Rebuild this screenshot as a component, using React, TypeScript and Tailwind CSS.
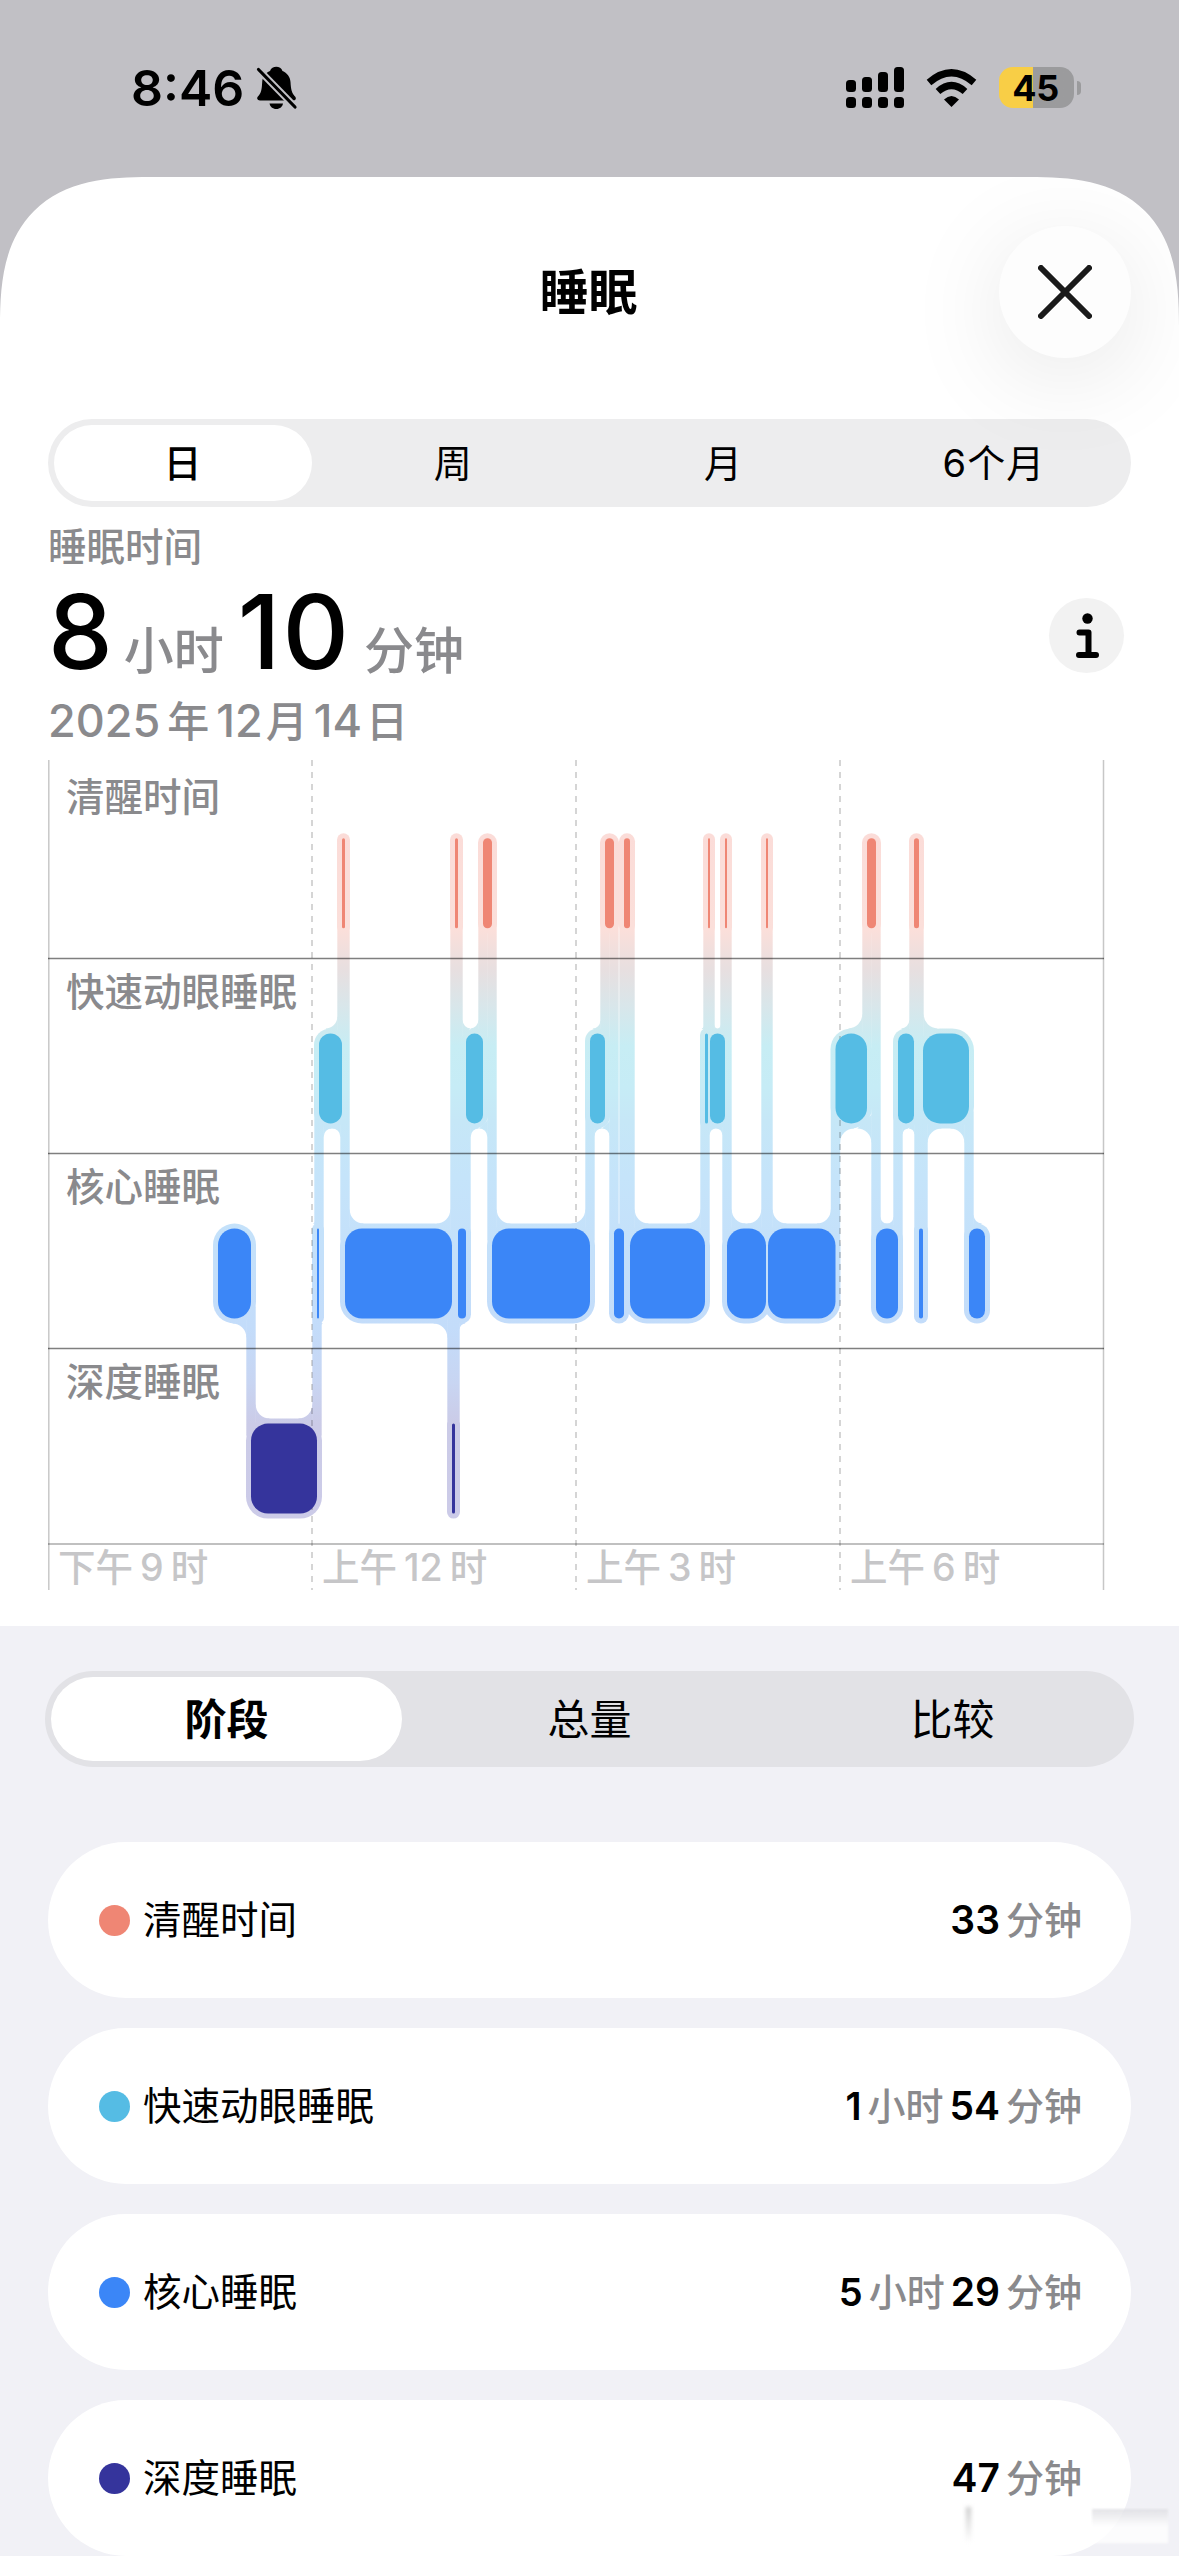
import React, { useState } from "react";

type Stage = 0 | 1 | 2 | 3;

interface Segment {
  stage: Stage;
  start: number;
  end: number;
}

const STAGES = [
  { name: "清醒时间", color: "#ef8674", dot: "bg-[#ef8674]", hours: "", minutes: "33" },
  { name: "快速动眼睡眠", color: "#55bce4", dot: "bg-[#55bce4]", hours: "1", minutes: "54" },
  { name: "核心睡眠", color: "#3b86f7", dot: "bg-[#3b86f7]", hours: "5", minutes: "29" },
  { name: "深度睡眠", color: "#35349c", dot: "bg-[#35349c]", hours: "", minutes: "47" },
];

// [stage, end] pairs, every segment starts where the previous one ended
const NIGHT: [Stage, number][] = [
  [2, 203], [3, 269], [2, 271], [1, 294], [0, 297], [2, 404], [3, 407], [0, 410],
  [2, 418], [1, 435], [0, 444], [2, 542], [1, 557], [0, 566], [2, 576], [0, 582],
  [2, 657], [1, 660], [0, 662], [1, 677], [0, 679], [2, 718], [0, 720], [2, 787.5],
  [1, 819], [0, 828], [2, 850], [1, 866], [0, 871], [2, 875], [1, 921], [2, 937],
];

const SEGMENTS: Segment[] = NIGHT.map(([stage, end], i) => ({
  stage,
  start: i === 0 ? 170 : NIGHT[i - 1][1],
  end,
}));

const BAR_H = 90;
const HALO = 5;
const LINK = 4.7;
const FILLET = 14;

const barTop = (stage: number) => 78.3 + stage * 195.1;

const LINKS = SEGMENTS.slice(1).map((seg, i) => {
  const prev = SEGMENTS[i].stage;
  return {
    x: seg.start,
    top: barTop(Math.min(prev, seg.stage)) + BAR_H - 12,
    bottom: barTop(Math.max(prev, seg.stage)) + 12,
  };
});

// concave corner at x, running towards the bar's middle (sx) and away from it (dir)
function fillet(x: number, y: number, r: number, sx: number, dir: number) {
  const sweep = sx === dir ? 1 : 0;
  return `M${x - sx * 0.5} ${y - dir * r}V${y + dir * r}H${x}A${r} ${r} 0 0 ${sweep} ${x + sx * r} ${y}Z`;
}

// rounds off the inner corners where a link meets the edge of a halo
function filletsFor(seg: Segment, side: "top" | "bottom") {
  const dir = side === "top" ? -1 : 1;
  const y = side === "top" ? barTop(seg.stage) - HALO : barTop(seg.stage) + BAR_H + HALO;
  const probe = y + dir * 30;
  const left = seg.start - HALO;
  const right = seg.end + HALO;
  const spans = LINKS
    .filter(l => l.top < probe && l.bottom > probe && l.x + LINK > left && l.x - LINK < right)
    .map(l => [l.x - LINK, l.x + LINK])
    .sort((a, b) => a[0] - b[0]);

  const paths: string[] = [];
  let cursor = left;
  let attached = false;
  const close = (end: number, endAttached: boolean) => {
    const gap = end - cursor;
    if (gap < 1) return;
    const r = Math.min(FILLET, gap / 2);
    if (attached) paths.push(fillet(cursor, y, r, 1, dir));
    if (endAttached) paths.push(fillet(end, y, r, -1, dir));
  };
  spans.forEach(([a, b]) => {
    if (a > cursor) close(a, true);
    cursor = Math.max(cursor, b);
    attached = true;
  });
  if (attached) close(right, false);
  return paths;
}

const FILLETS = SEGMENTS.flatMap(s => [...filletsFor(s, "top"), ...filletsFor(s, "bottom")]);

function StatusBar() {
  return (
    <div className="flex h-[177px] items-start justify-between pl-[131px] pr-[98px]">
      <div className="flex items-center pt-[58px]">
        <span className="text-[50px] leading-[60px] font-semibold">8:46</span>
        <svg className="ml-[12px] h-[44px] w-[42px]" viewBox="0 0 42 44">
          <path
            d="M5 34.500H37C39.500 34.500 40.500 33 39.500 31C35.500 26.500 35 24 34.500 16C34.200 10.500 31 7 26.500 5C25.500 2 23 0.800 20.300 0.800S15 2 14 5C9.500 7 6.500 10.500 6.200 16C5.700 24 5.500 26.500 1.500 31C0.500 33 2 34.500 5 34.500Z"
            fill="#000"
          />
          <path d="M13.500 37.500H27C26.500 40.500 24 43 20.300 43S14 40.500 13.500 37.500Z" fill="#000" />
          <path d="M0 1L42 44" stroke="#c1c0c5" strokeWidth="7" />
          <path d="M2.500 3.500L39 41" stroke="#000" strokeWidth="3.200" strokeLinecap="round" />
        </svg>
      </div>
      <div className="flex items-center pt-[67px]">
        <svg className="h-[41px] w-[58px]" viewBox="0 0 58 41">
          {[13, 10, 5, 0].map((y, i) => (
            <g key={y}>
              <rect x={i * 16} y={y} width="10" height={25 - y} rx="3.5" />
              <rect x={i * 16} y="30" width="10" height="11" rx="3.5" />
            </g>
          ))}
        </svg>
        <svg className="ml-[22px] h-[38px] w-[51px]" viewBox="0 0 51 38">
          <path d="M25.500 38L18 30.500Q25.500 23.500 33 30.500Z" />
          <path d="M12 22.500Q25.500 10.500 39 22.500" fill="none" stroke="#000" strokeWidth="7" />
          <path d="M3 13.500Q25.500 -6 48 13.500" fill="none" stroke="#000" strokeWidth="7" />
        </svg>
        <div className="ml-[22px] flex h-[41px] w-[75px] items-center justify-center rounded-[14px] bg-linear-to-r from-[#f8ce46] from-45% to-[#9b9b9d] to-45%">
          <span className="pr-[2px] text-[36px] leading-none font-bold tracking-[-0.5px]">45</span>
        </div>
        <div className="ml-[3px] h-[14px] w-[4px] rounded-r-full bg-[#9b9b9d]" />
      </div>
    </div>
  );
}

function Header() {
  return (
    <div className="grid h-[242px] grid-cols-[132px_1fr_132px] items-start px-[48px] pt-[49px]">
      <div />
      <h1 className="pr-[2px] text-center text-[49px] leading-[133px] font-bold">睡眠</h1>
      <button className="flex h-[132px] w-[132px] items-center justify-center rounded-full bg-[#fdfdfd] shadow-[0_18px_100px_rgba(0,0,0,0.1)]">
        <svg className="h-[54px] w-[54px]" viewBox="0 0 54 54">
          <path d="M3 3L51 51M51 3L3 51" stroke="#1a1a1a" strokeWidth="6" strokeLinecap="round" />
        </svg>
      </button>
    </div>
  );
}

function RangeTabs() {
  const [range, setRange] = useState("日");

  return (
    <div className="mx-[48px] grid h-[88px] grid-cols-4 rounded-full bg-[#ededee] pr-[2px]">
      {["日", "周", "月", "6个月"].map(label => (
        <button
          key={label}
          onClick={() => setRange(label)}
          className={`my-[6px] mr-[6px] ml-[6px] rounded-full pt-px text-[38px] tracking-[1px] ${range === label ? "bg-white font-medium" : ""}`}
        >
          {label}
        </button>
      ))}
    </div>
  );
}

function Summary() {
  return (
    <div className="flex h-[253px] items-start justify-between pr-[55px] pl-[48px] text-[#8a8a8d]">
      <div>
        <p className="mt-[18px] text-[38.5px] leading-[44px] font-medium">睡眠时间</p>
        <div className="mt-[3px] flex h-[100px] items-baseline font-medium">
          <span className="text-[103px] leading-[120px] tracking-[-1px] text-black">8</span>
          <span className="ml-[12px] text-[50px]">小时</span>
          <span className="ml-[14px] text-[103px] leading-[120px] tracking-[2px] text-black">10</span>
          <span className="ml-[13px] text-[50px]">分钟</span>
        </div>
        <p className="mt-[24px] flex items-baseline text-[45px] leading-[50px] font-medium">
          <span>2025</span>
          <span className="ml-[7px] text-[42px]">年</span>
          <span className="ml-[7px]">12</span>
          <span className="ml-[3px] text-[42px]">月</span>
          <span className="ml-[6px]">14</span>
          <span className="ml-[4px] text-[42px]">日</span>
        </p>
      </div>
      <button className="mt-[91px] flex h-[75px] w-[75px] items-center justify-center rounded-full bg-[#f2f2f2]">
        <svg className="h-[46px] w-[24px]" viewBox="0 0 24 46">
          <circle cx="12.500" cy="5.500" r="5.200" />
          <path d="M4.500 19.500H13.500V42M4 42H21" fill="none" stroke="#000" strokeWidth="6" strokeLinecap="round" strokeLinejoin="round" />
        </svg>
      </button>
    </div>
  );
}

function SleepChart() {
  return (
    <div className="relative ml-[48px] h-[866px] w-[1056px]">
      <svg className="absolute top-0 left-0 h-[830px] w-[1058px]" viewBox="0 0 1058 830">
        <defs>
          <linearGradient id="halo" gradientUnits="userSpaceOnUse" x1="0" y1="73" x2="0" y2="760">
            <stop offset="0" stopColor="#fbdcd8" />
            <stop offset="0.14" stopColor="#fbdfda" />
            <stop offset="0.2" stopColor="#e7dfe0" />
            <stop offset="0.25" stopColor="#d9e6ea" />
            <stop offset="0.31" stopColor="#c7edf4" />
            <stop offset="0.37" stopColor="#c6ecf6" />
            <stop offset="0.42" stopColor="#c6e7f7" />
            <stop offset="0.5" stopColor="#c5e4fa" />
            <stop offset="0.72" stopColor="#c3dcfa" />
            <stop offset="0.8" stopColor="#c8d5f2" />
            <stop offset="0.86" stopColor="#cbcbe7" />
            <stop offset="1" stopColor="#cccbe8" />
          </linearGradient>
        </defs>
        <g fill="url(#halo)">
          {SEGMENTS.map(s => (
            <rect
              key={s.start}
              x={s.start - HALO}
              y={barTop(s.stage) - HALO}
              width={s.end - s.start + HALO * 2}
              height={BAR_H + HALO * 2}
              rx={Math.min(17, (s.end - s.start) / 2) + HALO}
            />
          ))}
          {LINKS.map(l => (
            <rect key={l.x} x={l.x - LINK} y={l.top} width={LINK * 2} height={l.bottom - l.top} />
          ))}
          {FILLETS.map((d, i) => (
            <path key={i} d={d} />
          ))}
        </g>
        <g stroke="#000" strokeOpacity="0.22" strokeWidth="1.500">
          <path d="M0.800 0V830M1055.500 0V830" />
          <path d="M264 0V830M528 0V830M792 0V830" strokeDasharray="6 6" />
        </g>
        <g stroke="#000" strokeWidth="1.500">
          <path d="M0 198.500H1056M0 393.500H1056M0 588.500H1056" strokeOpacity="0.5" />
          <path d="M0 784H1056" strokeOpacity="0.33" />
        </g>
        {SEGMENTS.map(s => (
          <rect
            key={s.start}
            x={s.start}
            y={barTop(s.stage)}
            width={s.end - s.start}
            height={BAR_H}
            rx={Math.min(17, (s.end - s.start) / 2)}
            fill={STAGES[s.stage].color}
          />
        ))}
      </svg>
      <div className="grid grid-rows-[199px_195px_195px_195px] pl-[18px] text-[38.5px] font-medium text-[#8a8a8d]">
        {STAGES.map((s, i) => (
          <span key={s.name} className={i === 0 ? "pt-[15px] leading-[44px]" : "pt-[11px] leading-[44px]"}>
            {s.name}
          </span>
        ))}
      </div>
      <div className="grid h-[46px] grid-cols-4 pt-px text-[37.5px] leading-[46px] font-medium text-[#c6c6c8]">
        {[["下午", "9"], ["上午", "12"], ["上午", "3"], ["上午", "6"]].map(([half, hour]) => (
          <div key={half + hour} className="flex gap-[7px] pl-[10px]">
            <span>{half}</span>
            <span>{hour}</span>
            <span>时</span>
          </div>
        ))}
      </div>
    </div>
  );
}

function StageList() {
  const [view, setView] = useState("阶段");

  return (
    <div className="h-[930px] bg-[#f1f1f6] pt-[45px]">
      <div className="mx-[45px] grid h-[96px] grid-cols-3 rounded-full bg-[#e2e2e6]">
        {["阶段", "总量", "比较"].map(label => (
          <button
            key={label}
            onClick={() => setView(label)}
            className={`m-[6px] rounded-full text-[42px] ${view === label ? "bg-white font-bold" : ""}`}
          >
            {label}
          </button>
        ))}
      </div>
      <div className="mx-[48px] mt-[75px] flex flex-col gap-[30px]">
        {STAGES.map(s => (
          <div key={s.name} className="flex h-[156px] items-center rounded-full bg-white pr-[49px] pl-[51px] text-[38px]">
            <span className={`h-[31px] w-[31px] rounded-full ${s.dot}`} />
            <span className="ml-[13px] pt-px text-[38.5px]">{s.name}</span>
            <div className="ml-auto flex items-baseline gap-[6px] pt-px font-semibold">
              {s.hours && (
                <>
                  <span>{s.hours}</span>
                  <span className="font-medium text-[#8a8a8d]">小时</span>
                </>
              )}
              <span className="text-[39px]">{s.minutes}</span>
              <span className="font-medium text-[#8a8a8d]">分钟</span>
            </div>
          </div>
        ))}
      </div>
    </div>
  );
}

export default function App() {
  return (
    <div className="relative h-[2556px] w-[1179px] overflow-hidden bg-[#c1c0c5] font-[Inter,'Noto_Sans_CJK_SC',sans-serif] text-black">
      <StatusBar />
      <div className="overflow-hidden rounded-t-[120px] bg-white [corner-shape:superellipse(1.43)] supports-[corner-shape:round]:rounded-t-[150px]">
        <Header />
        <RangeTabs />
        <Summary />
        <SleepChart />
        <StageList />
      </div>
      <div className="absolute right-[11px] bottom-[13px] h-[34px] w-[76px] bg-linear-to-b from-[#dedee2] to-white to-50% opacity-80 blur-[1px]" />
      <div className="absolute right-[208px] bottom-[13px] h-[36px] w-[5px] bg-linear-to-b from-[#c9c9c9] to-white blur-[2px]" />
    </div>
  );
}
